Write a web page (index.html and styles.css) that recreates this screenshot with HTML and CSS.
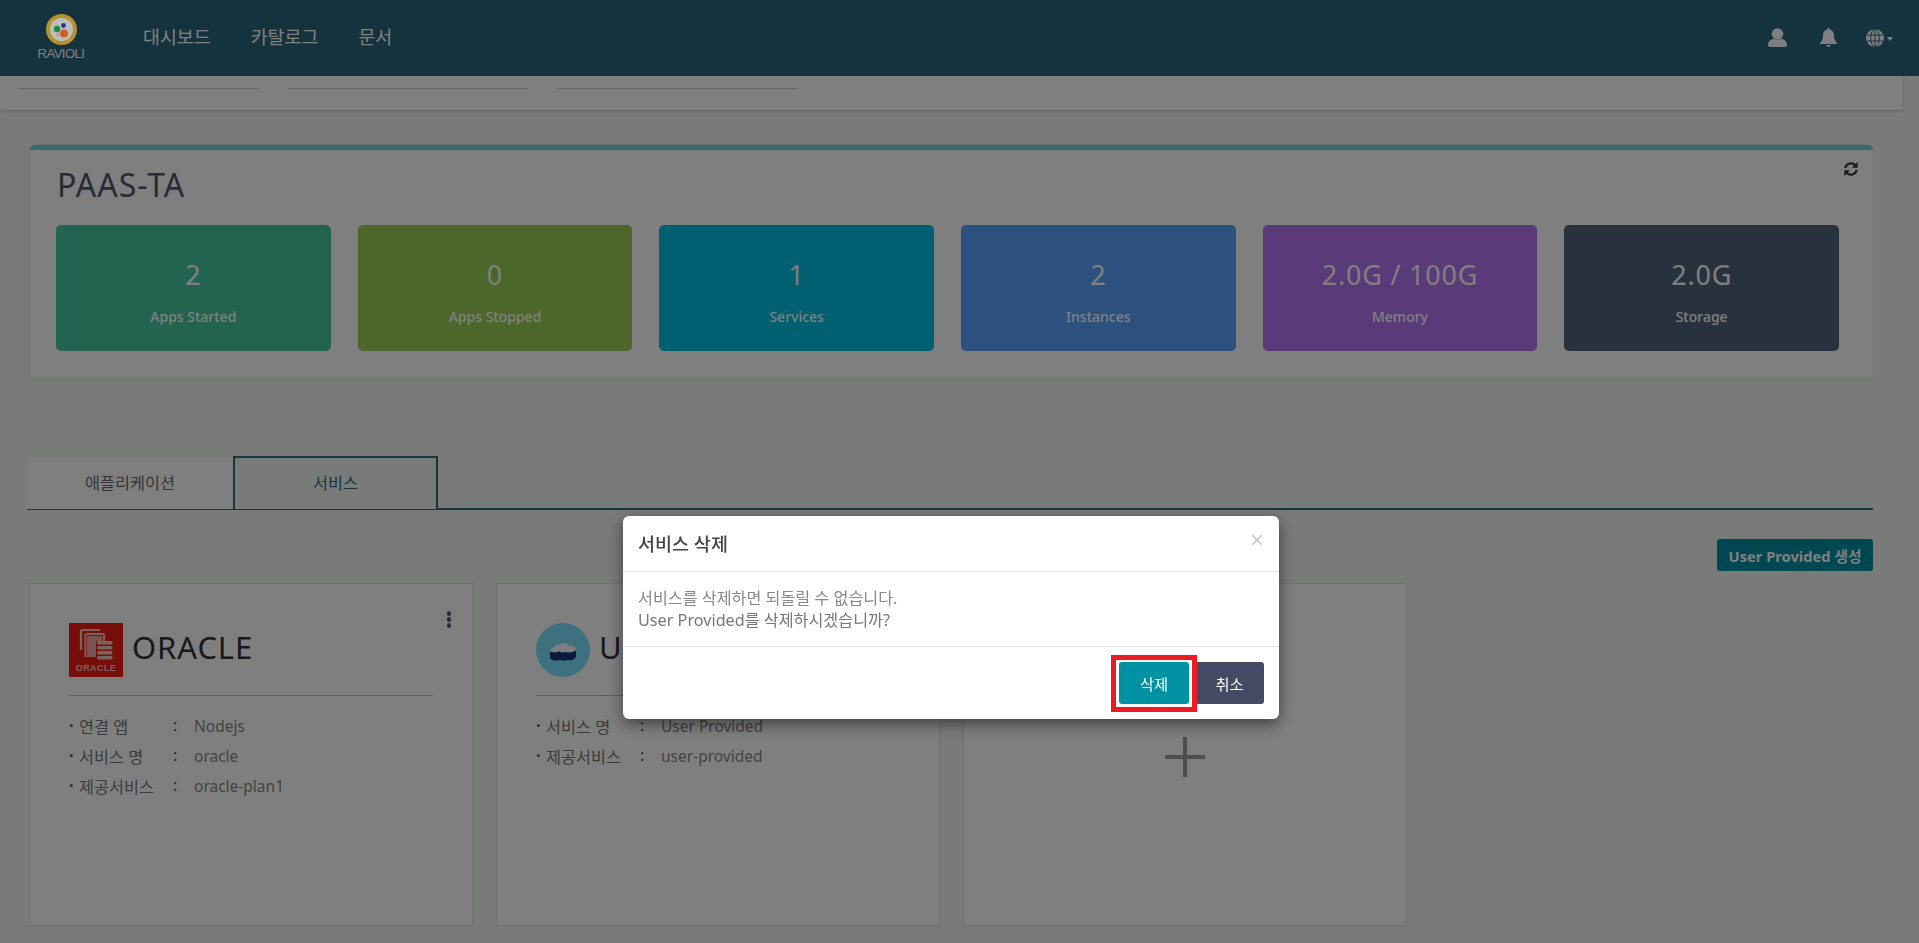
FILE: index.html
```html
<!DOCTYPE html>
<html lang="ko">
<head>
<meta charset="utf-8">
<title>RAVIOLI</title>
<link rel="stylesheet" href="styles.css">
</head>
<body>
<header class="topnav">
  <div class="brand">
    <svg class="brand-mark" viewBox="0 0 31 31" width="31" height="31">
      <circle cx="15.5" cy="15.5" r="15.5" fill="#b5922c"/>
      <circle cx="15.5" cy="15.5" r="11.5" fill="#bdbdbd"/>
      <circle cx="11" cy="15" r="3.2" fill="#1f8a3c"/>
      <circle cx="17.5" cy="11.5" r="2.4" fill="#1d3f8a"/>
      <circle cx="18" cy="19.5" r="4" fill="#c9622a"/>
      <circle cx="12" cy="21" r="1.3" fill="#c98f4a"/>
    </svg>
    <span class="brand-name">RAVIOLI</span>
  </div>
  <nav class="menu">
    <a class="menu-item">대시보드</a>
    <a class="menu-item">카탈로그</a>
    <a class="menu-item">문서</a>
  </nav>
  <div class="nav-icons">
    <svg class="nav-icon icon-user" viewBox="0 0 19 19" width="19" height="19">
      <circle cx="9.5" cy="6" r="5.8" fill="#fff"/>
      <path d="M0 17c0-4 3-5.6 5.5-6.2 2.4 1.4 5.6 1.4 8 0C16 11.400 19 13 19 17c0 1.300-.8 2-2 2H2c-1.200 0-2-.7-2-2z" fill="#fff"/>
    </svg>
    <svg class="nav-icon icon-bell" viewBox="0 0 17 19" width="17" height="19">
      <path d="M8.500 0c.8 0 1.300.6 1.300 1.400C12.500 2 14 4.200 14 7c0 4 1 6 3 8v1H0v-1c2-2 3-4 3-8 0-2.800 1.500-5 4.200-5.600C7.200.6 7.700 0 8.500 0zM6.500 17h4c0 1.200-.9 2-2 2s-2-.8-2-2z" fill="#fff"/>
    </svg>
    <div class="lang">
      <svg class="nav-icon" viewBox="0 0 18 18" width="18" height="18">
        <circle cx="9" cy="9" r="9" fill="#fff"/>
        <g fill="none" stroke="#2a687e" stroke-width="1">
          <ellipse cx="9" cy="9" rx="4.200" ry="9"/>
          <path d="M9 0v18M.8 6h16.400M.8 12h16.400"/>
        </g>
      </svg>
      <span class="caret"></span>
    </div>
  </div>
</header>

<div class="filterbar">
  <span class="filter-field"></span>
  <span class="filter-field"></span>
  <span class="filter-field"></span>
</div>

<main class="content">
  <section class="summary">
    <div class="summary-head">
      <h1 class="summary-title">PAAS-TA</h1>
      <svg class="refresh" viewBox="0 0 24 24" width="16" height="16">
        <g fill="none" stroke="#333" stroke-width="3.200">
          <path d="M3.500 10.500A8.700 8.700 0 0 1 18.500 6.500"/>
          <path d="M20.500 13.500A8.700 8.700 0 0 1 5.500 17.500"/>
        </g>
        <path d="M22 1.500V10h-8.500zM2 22.500V14h8.500z" fill="#333"/>
      </svg>
    </div>
    <div class="stats">
      <div class="stat stat-green"><strong class="stat-value">2</strong><span class="stat-label">Apps Started</span></div>
      <div class="stat stat-lime"><strong class="stat-value">0</strong><span class="stat-label">Apps Stopped</span></div>
      <div class="stat stat-cyan"><strong class="stat-value">1</strong><span class="stat-label">Services</span></div>
      <div class="stat stat-blue"><strong class="stat-value">2</strong><span class="stat-label">Instances</span></div>
      <div class="stat stat-purple"><strong class="stat-value">2.0G / 100G</strong><span class="stat-label">Memory</span></div>
      <div class="stat stat-navy"><strong class="stat-value">2.0G</strong><span class="stat-label">Storage</span></div>
    </div>
  </section>

  <div class="tabs">
    <a class="tab">애플리케이션</a>
    <a class="tab tab-active">서비스</a>
  </div>

  <div class="toolbar"><button class="btn-create">User Provided 생성</button></div>

  <div class="cards">
    <article class="card">
      <span class="card-more"><i></i><i></i><i></i></span>
      <div class="card-head">
        <svg class="card-logo" viewBox="0 0 54 54" width="54" height="54">
          <rect width="54" height="54" fill="#f01c14"/>
          <g fill="none" stroke="#f2c4c0" stroke-width="2.200">
            <path d="M12 27V8.500a1.500 1.500 0 0 1 1.500-1.500H31"/>
            <path d="M16.500 34V12.500a1.500 1.500 0 0 1 1.500-1.500H33.500a1.500 1.500 0 0 1 1.500 1.500V18"/>
          </g>
          <rect x="17.500" y="12" width="16.500" height="21" fill="#f01c14"/>
          <path d="M18 13h15v5h-6v16h-9z" fill="#f2a8a2"/>
          <g fill="#f2c4c0">
            <rect x="28" y="18" width="15.500" height="3.600" rx="1.500"/>
            <rect x="28" y="23" width="15.500" height="3.600" rx="1.500"/>
            <rect x="28" y="28" width="15.500" height="3.600" rx="1.500"/>
            <rect x="28" y="33" width="15.500" height="3.600" rx="1.500"/>
          </g>
          <text class="logo-word" x="27" y="48" text-anchor="middle">ORACLE</text>
        </svg>
        <h2 class="card-title">ORACLE</h2>
      </div>
      <dl class="info">
        <div class="info-row"><dt>연결 앱</dt><dd>Nodejs</dd></div>
        <div class="info-row"><dt>서비스 명</dt><dd>oracle</dd></div>
        <div class="info-row"><dt>제공서비스</dt><dd>oracle-plan1</dd></div>
      </dl>
    </article>

    <article class="card">
      <div class="card-head">
        <svg class="card-logo" viewBox="0 0 54 54" width="54" height="54">
          <circle cx="27" cy="27" r="27" fill="#7de2ff"/>
          <path d="M14 29c0-3 2-4 4-4 1-3 4-4 6-3 2-2 7-2 9 1 3-1 6 0 7 3 0 1 0 3 0 3z" fill="#fff"/>
          <path d="M14 28c3 2 7 2 9 0 2 2 4 2 6 1 3 1 8 1 11-2v7c-2 3-5 4-8 3-3 1-6 1-8 0-3 1-8 1-10-2z" fill="#16337a"/>
        </svg>
        <h2 class="card-title">User Provided</h2>
      </div>
      <dl class="info">
        <div class="info-row"><dt>서비스 명</dt><dd>User Provided</dd></div>
        <div class="info-row"><dt>제공서비스</dt><dd>user-provided</dd></div>
      </dl>
    </article>

    <article class="card card-add">
      <span class="plus"></span>
    </article>
  </div>
</main>

<div class="backdrop">
  <div class="modal">
    <div class="modal-head">
      <h3 class="modal-title">서비스 삭제</h3>
      <span class="modal-close">×</span>
    </div>
    <div class="modal-body">
      <p>서비스를 삭제하면 되돌릴 수 없습니다.</p>
      <p class="modal-ask">User Provided를 삭제하시겠습니까?</p>
    </div>
    <div class="modal-foot">
      <button class="btn btn-ok">삭제</button>
      <button class="btn btn-cancel">취소</button>
      <span class="callout"></span>
    </div>
  </div>
</div>
</body>
</html>
```
FILE: styles.css
```css
* { box-sizing: border-box; }
html, body { margin: 0; height: 943px; overflow: hidden; }
body {
  background: #f3f7f3;
  font-family: "Noto Sans", "Noto Sans CJK KR", sans-serif;
  color: #555;
}
h1, h2, h3, p, dl, dd, dt { margin: 0; font-weight: 400; }

/* top navigation */
.topnav {
  height: 76px;
  background: #2a677c;
  display: flex;
  align-items: center;
  padding-left: 37px;
  color: #fff;
}
.brand { width: 48px; display: flex; flex-direction: column; align-items: center; margin-top: -3px; }
.brand-mark { position: relative; z-index: 60; }
.brand-name {
  font-family: "Liberation Sans", sans-serif;
  font-size: 13px;
  line-height: 13px;
  letter-spacing: -0.5px;
  margin-top: 2px;
  color: #fff;
}
.menu { display: flex; gap: 40px; margin: -2px 0 0 58px; }
.menu-item { font-size: 18.4px; line-height: 26px; }
.nav-icons { margin-left: auto; display: flex; align-items: center; padding-right: 26px; margin-top: -1px; }
.icon-user { margin-right: 33px; }
.icon-bell { margin-right: 29px; }
.nav-icon { display: block; }
.lang { display: flex; align-items: center; gap: 3px; }
.caret { border: 3px solid transparent; border-top: 4px solid #fff; border-bottom: 0; margin-top: 3px; }

/* strip under the nav */
.filterbar {
  width: 1903px;
  height: 34px;
  background: #fff;
  display: flex;
  gap: 30px;
  padding-left: 18px;
  box-shadow: 0 1px 3px rgba(0,0,0,.2);
}
.filter-field { width: 240px; height: 13px; border-bottom: 1px solid #ccc; }

.content { width: 1903px; padding: 35px 30px 0 30px; }

/* summary panel */
.summary {
  height: 232px;
  background: #fff;
  border-top: 5px solid #6cd2de;
  border-radius: 5px 5px 0 0;
  box-shadow: 0 0 2px rgba(0,0,0,.2);
  padding: 0 34px 0 26px;
}
.summary-head { height: 75px; display: flex; justify-content: space-between; }
.summary-title { font-size: 32px; letter-spacing: 1px; line-height: 44px; margin-top: 13px; padding-left: 1px; color: #50586a; }
.refresh { margin: 11px -20px 0 0; }
.stats { display: grid; grid-template-columns: repeat(6, 1fr); gap: 27px; }
.stat {
  height: 126px;
  border-radius: 5px;
  display: flex;
  flex-direction: column;
  align-items: center;
  color: #fff;
}
.stat-value { font-size: 27px; font-weight: 400; letter-spacing: .8px; line-height: 36px; margin-top: 32px; }
.stat-label { font-size: 14px; line-height: 20px; margin-top: 14px; font-weight: 500; }
.stat-green { background: #44c8a0; }
.stat-lime { background: #9ace56; }
.stat-cyan { background: #00bee0; }
.stat-blue { background: #5aa2fe; }
.stat-purple { background: #b474f0; }
.stat-navy { background: #50647c; }

/* tabs */
.tabs {
  display: flex;
  height: 53px;
  margin: 80px 0 0 -3px;
  border-bottom: 2px solid #2f6a80;
}
.tab {
  width: 206px;
  height: 51px;
  margin-top: 1px;
  background: #fff;
  text-align: center;
  font-size: 16.3px;
  line-height: 50px;
  color: #6b6b6b;
}
.tab-active {
  width: 205px;
  height: 53px;
  margin-top: -1px;
  background: #f3f7f3;
  border: 2px solid #2f6a80;
  border-bottom: 0;
  color: #2f6b80;
  line-height: 50px;
  margin-bottom: -2px;
}

.toolbar { display: flex; justify-content: flex-end; margin-top: 29px; }
.btn-create {
  width: 156px;
  height: 32px;
  border: 0;
  border-radius: 3px;
  background: #0091a2;
  color: #fff;
  font: 700 14.7px "Noto Sans", "Noto Sans CJK KR", sans-serif;
  padding: 0;
}

/* cards */
.cards {
  display: grid;
  grid-template-columns: repeat(3, 444px);
  gap: 23px;
  margin: 12px 0 0 -1px;
}
.card {
  position: relative;
  height: 343px;
  background: #fff;
  border: 1px solid #e2e2e2;
  padding: 39px 39px 0 39px;
}
.card-head {
  display: flex;
  align-items: center;
  gap: 9px;
  height: 73px;
  padding-bottom: 18px;
  border-bottom: 1px solid #bbb;
  overflow: hidden;
}
.card-logo { flex: none; display: block; }
.card-title { font-size: 31px; letter-spacing: .9px; line-height: 44px; color: #333; white-space: nowrap; margin-top: -7px; }
.logo-word { font: 700 9px "Liberation Sans", sans-serif; fill: #f2c4c0; letter-spacing: .4px; }
.card-more { position: absolute; top: 27px; right: 21px; display: flex; flex-direction: column; gap: 1.500px; }
.card-more i { width: 4.500px; height: 4.500px; border-radius: 50%; background: #50586a; display: block; }
.info { margin-top: 15px; }
.info-row { display: flex; height: 30px; align-items: center; font-size: 15.5px; }
.info-row dt { width: 125px; position: relative; padding-left: 10px; color: #777; font-size: 16.3px; }
.info-row dt::before { content: "·"; position: absolute; left: 0; font-weight: 700; color: #555; }
.info-row dt::after { content: ":"; position: absolute; left: 104px; color: #555; }
.info-row dd { color: #888; }
.card-add { display: flex; justify-content: center; padding: 153px 0 0 0; }
.plus {
  width: 40px;
  height: 40px;
  background:
    linear-gradient(#9c9c9c, #9c9c9c) center / 40px 4px no-repeat,
    linear-gradient(#9c9c9c, #9c9c9c) center / 4px 40px no-repeat;
}

/* modal */
.backdrop { position: fixed; inset: 0; z-index: 50; background: rgba(0,0,0,.5); }
.modal {
  width: 656px;
  height: 203px;
  margin: 516px 0 0 623px;
  background: #fff;
  border-radius: 6px;
  box-shadow: 0 5px 15px rgba(0,0,0,.5);
  display: flex;
  flex-direction: column;
}
.modal-head {
  height: 56px;
  padding: 0 15px;
  display: flex;
  align-items: center;
  justify-content: space-between;
  border-bottom: 1px solid #e5e5e5;
}
.modal-title { font-size: 18.5px; font-weight: 500; color: #444; line-height: 26px; }
.modal-close { font: 400 24px/24px "Liberation Sans", sans-serif; color: #ccc; margin-top: -8px; }
.modal-body { height: 74px; padding: 15px 15px 0; font-size: 16.2px; line-height: 22px; color: #888; }
.modal-ask { color: #777; }
.modal-foot {
  position: relative;
  flex: 1;
  display: flex;
  justify-content: flex-end;
  align-items: flex-start;
  gap: 6px;
  padding: 15px 15px 0 0;
  border-top: 1px solid #e5e5e5;
}
.btn { height: 42px; border: 0; border-radius: 3px; color: #fff; font: 400 15.3px "Noto Sans CJK KR", sans-serif; padding: 0; }
.btn-ok { width: 70px; background: #0091a2; }
.btn-cancel { width: 69px; background: #444a63; }
.callout {
  position: absolute;
  left: 488px;
  top: 8px;
  width: 86px;
  height: 57px;
  border: 5px solid #ed1c24;
}
```
